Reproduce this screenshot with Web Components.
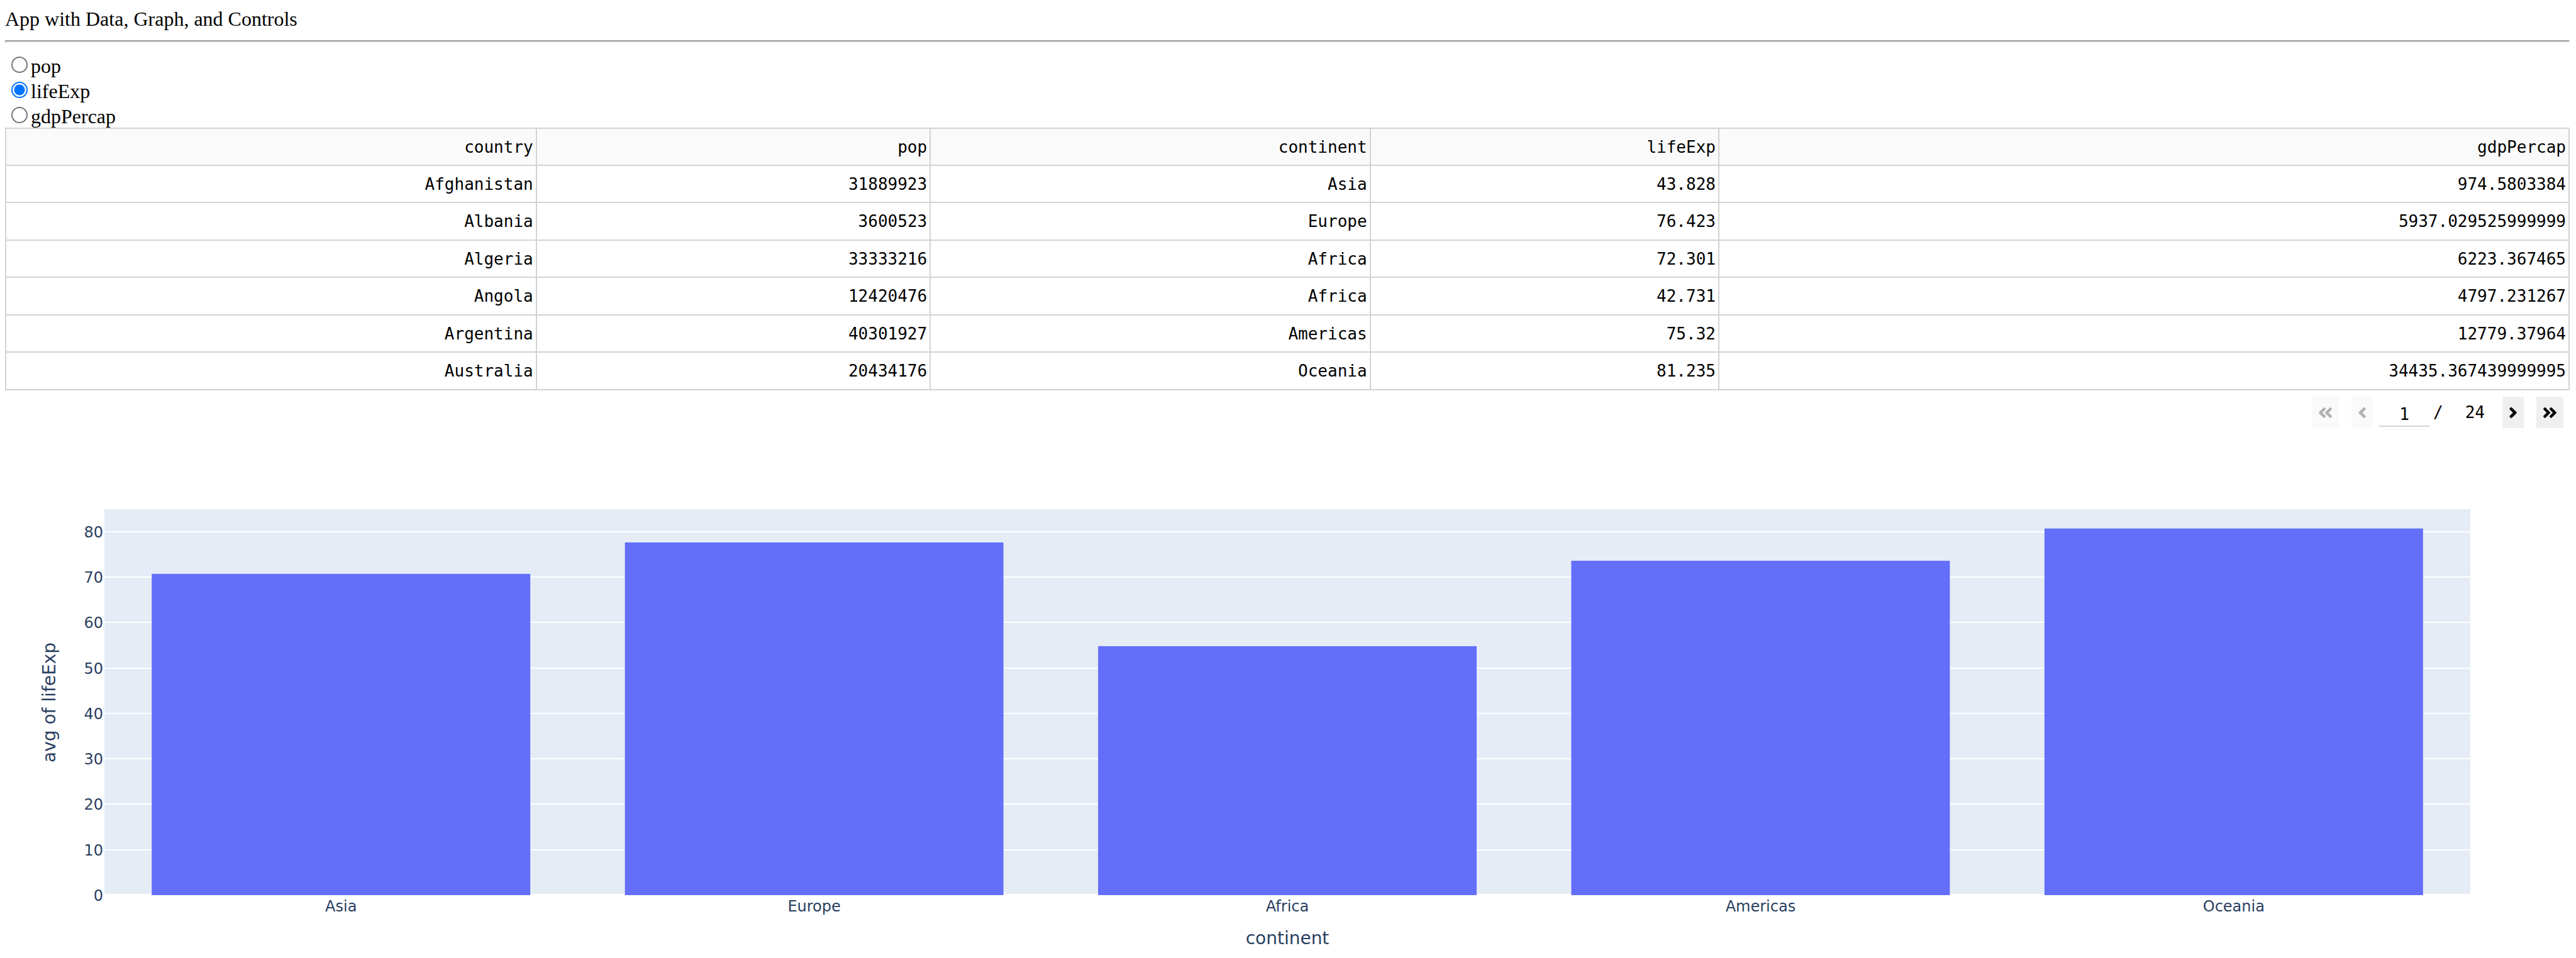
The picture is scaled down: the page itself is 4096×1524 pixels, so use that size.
<!DOCTYPE html>
<html lang="en">
<head>
<meta charset="utf-8">
<title>App with Data, Graph, and Controls</title>
<style>
  body { margin: 0; background: #fff; color: #000; font: 32px/39px "Liberation Serif", "Times New Roman", serif; }
</style>
</head>
<body>
<dash-app>
  <span slot="title">App with Data, Graph, and Controls</span>
  <radio-items name="metric" options="pop,lifeExp,gdpPercap" value="lifeExp"></radio-items>
  <data-table></data-table>
  <page-nav page="1" pages="24"></page-nav>
  <bar-chart xlabel="continent" ylabel="avg of lifeExp"></bar-chart>
</dash-app>

<script>
class DashApp extends HTMLElement {
  constructor() {
    super();
    this.attachShadow({ mode: 'open' }).innerHTML = `
      <style>
        :host { display: block; padding: 12px 10px 0 8px; }
        header { line-height: 36px; }
        hr { margin: 16px 0; border: 2px solid; border-color: #9a9a9a #eee #eee #9a9a9a; }
      </style>
      <header><slot name="title"></slot></header>
      <hr>
      <main><slot></slot></main>`;
  }
}

class RadioItems extends HTMLElement {
  connectedCallback() {
    const name = this.getAttribute('name');
    const value = this.getAttribute('value');
    const items = this.getAttribute('options').split(',').map(o => `
      <label><input type="radio" name="${name}" value="${o}"${o === value ? ' checked' : ''}><span>${o}</span></label>`).join('');
    this.attachShadow({ mode: 'open' }).innerHTML = `
      <style>
        :host { display: block; }
        .group { display: flex; flex-direction: column; gap: 1px; }
        label { display: flex; align-items: flex-start; gap: 5px; height: 39px; line-height: 42px; }
        input { appearance: none; box-sizing: border-box; width: 26px; height: 26px; margin: 6px 0 0 10px;
          border: 2px solid #767676; border-radius: 50%; background: #fff; }
        input:checked { border-color: #0075ff; background: radial-gradient(circle, #0075ff 8px, #fff 9px); }
      </style>
      <div class="group" role="radiogroup">${items}</div>`;
  }
}

class DataTable extends HTMLElement {
  connectedCallback() {
    const columns = ['country', 'pop', 'continent', 'lifeExp', 'gdpPercap'];
    const rows = [
      ['Afghanistan', '31889923', 'Asia', '43.828', '974.5803384'],
      ['Albania', '3600523', 'Europe', '76.423', '5937.029525999999'],
      ['Algeria', '33333216', 'Africa', '72.301', '6223.367465'],
      ['Angola', '12420476', 'Africa', '42.731', '4797.231267'],
      ['Argentina', '40301927', 'Americas', '75.32', '12779.37964'],
      ['Australia', '20434176', 'Oceania', '81.235', '34435.367439999995'],
    ];
    this.attachShadow({ mode: 'open' }).innerHTML = `
      <style>
        :host { display: block; }
        table { width: 100%; border-collapse: collapse; table-layout: fixed;
          font: 26px/30px "DejaVu Sans Mono", Menlo, monospace; }
        th, td { box-sizing: border-box; height: 59px; padding: 0 4px; border: 2px solid #d3d3d3; text-align: right; font-weight: 400; }
        tbody tr:nth-child(even) td { height: 60px; }
        th { background: #fafafa; }
        .c1 { width: 20.7%; } .c2 { width: 15.37%; } .c3 { width: 17.16%; } .c4 { width: 13.6%; }
      </style>
      <table>
        <colgroup><col class="c1"><col class="c2"><col class="c3"><col class="c4"><col></colgroup>
        <thead><tr>${columns.map(c => `<th scope="col">${c}</th>`).join('')}</tr></thead>
        <tbody>${rows.map(r => `<tr>${r.map(c => `<td>${c}</td>`).join('')}</tr>`).join('')}</tbody>
      </table>`;
  }
}

class PageNav extends HTMLElement {
  connectedCallback() {
    const single = '<path d="M31.7 239l136-136c9.4-9.4 24.6-9.4 33.9 0l22.6 22.6c9.4 9.4 9.4 24.6 0 33.9L127.9 256l96.4 96.4c9.4 9.4 9.4 24.6 0 33.9L201.7 409c-9.4 9.4-24.6 9.4-33.9 0l-136-136c-9.5-9.4-9.5-24.6-.1-34z"/>';
    const double = '<path d="M223.7 239l136-136c9.4-9.4 24.6-9.4 33.9 0l22.6 22.6c9.4 9.4 9.4 24.6 0 33.9L319.9 256l96.4 96.4c9.4 9.4 9.4 24.6 0 33.9L393.7 409c-9.4 9.4-24.6 9.4-33.9 0l-136-136c-9.5-9.4-9.5-24.6-.1-34zm-192 34l136 136c9.4 9.4 24.6 9.4 33.9 0l22.6-22.6c9.4-9.4 9.4-24.6 0-33.9L127.9 256l96.4-96.4c9.4-9.4 9.4-24.6 0-33.9L201.7 103c-9.4-9.4-24.6-9.4-33.9 0l-136 136c-9.5 9.4-9.5 24.6-.1 34z"/>';
    this.attachShadow({ mode: 'open' }).innerHTML = `
      <style>
        :host { display: block; padding: 10px 10px 0 0; font: 26px/30px "DejaVu Sans Mono", Menlo, monospace; }
        nav { display: flex; justify-content: flex-end; align-items: center; height: 50px; }
        button { display: flex; align-items: center; justify-content: center; box-sizing: border-box; height: 50px;
          margin: 0; padding: 0 10px; border: 0; background: #efefef; color: #000; }
        button + button { margin-left: 20px; }
        button:disabled { opacity: .3; }
        svg { display: block; height: 27px; fill: currentColor; stroke: currentColor; stroke-width: 10; }
        .s { width: 14px; } .d { width: 23px; }
        .flip { transform: scaleX(-1); }
        .page { display: flex; align-items: center; margin: 0 28px 0 10px; }
        input { box-sizing: border-box; width: 80px; height: 46px; padding: 8px 0 0; border: 0; border-bottom: 2px solid #d3d3d3;
          background: none; font: inherit; text-align: center; color: #000; outline: 0; }
        .slash { margin: 0 35px 0 6px; }
      </style>
      <nav aria-label="Pages">
        <button type="button" disabled aria-label="First page"><svg class="d" viewBox="0 0 448 512">${double}</svg></button>
        <button type="button" disabled aria-label="Previous page"><svg class="s" viewBox="0 0 256 512">${single}</svg></button>
        <div class="page">
          <input type="text" aria-label="Current page" value="${this.getAttribute('page')}">
          <span class="slash">/</span>
          <span>${this.getAttribute('pages')}</span>
        </div>
        <button type="button" aria-label="Next page"><svg class="s flip" viewBox="0 0 256 512">${single}</svg></button>
        <button type="button" aria-label="Last page"><svg class="d flip" viewBox="0 0 448 512">${double}</svg></button>
      </nav>`;
  }
}

class BarChart extends HTMLElement {
  connectedCallback() {
    const data = [['Asia', 70.7285], ['Europe', 77.6486], ['Africa', 54.806], ['Americas', 73.608], ['Oceania', 80.7195]];
    const max = 80.7195 / 0.95;
    const y = v => (100 - v / max * 100).toFixed(3) + '%';
    const ticks = [0, 10, 20, 30, 40, 50, 60, 70, 80];
    const lines = ticks.map(t => `<line x1="0" x2="100%" y1="${y(t)}" y2="${y(t)}" stroke-width="${t ? 2 : 4}"/>`).join('');
    const labels = ticks.map(t => `<text x="0" y="${y(t)}" dx="-2" dy="9" text-anchor="end">${t}</text>`).join('');
    const bars = data.map(([, v], i) =>
      `<rect x="${i * 20 + 2}%" width="16%" y="${y(v)}" height="${(v / max * 100).toFixed(3)}%"/>`).join('');
    const names = data.map(([n]) => `<span>${n}</span>`).join('');
    this.attachShadow({ mode: 'open' }).innerHTML = `
      <style>
        :host { display: block; padding-top: 129px; color: #2a3f5f;
          font: 24px/28px "DejaVu Sans", Verdana, sans-serif; }
        figure { display: grid; grid-template-columns: 88px minmax(0, 1fr); column-gap: 70px; margin: 0 158px 0 0; }
        .ylabel { justify-self: end; align-self: center; writing-mode: vertical-rl; transform: rotate(180deg);
          font-size: 28px; line-height: 34px; }
        .plot { display: block; width: 100%; height: 614px; overflow: visible; background: #e5ecf6; fill: #2a3f5f; }
        .grid { stroke: #fff; shape-rendering: crispEdges; }
        .bars { fill: #636efa; }
        .names { grid-column: 2; display: flex; margin-top: 4px; }
        .names span { flex: 1; text-align: center; }
        figcaption { grid-column: 2; margin-top: 20px; text-align: center; font-size: 28px; line-height: 34px; }
      </style>
      <figure>
        <div class="ylabel">${this.getAttribute('ylabel')}</div>
        <svg class="plot" role="img" aria-label="${this.getAttribute('ylabel')} by ${this.getAttribute('xlabel')}">
          <g class="grid">${lines}</g><g class="bars">${bars}</g><g>${labels}</g>
        </svg>
        <div class="names">${names}</div>
        <figcaption>${this.getAttribute('xlabel')}</figcaption>
      </figure>`;
  }
}

customElements.define('radio-items', RadioItems);
customElements.define('data-table', DataTable);
customElements.define('page-nav', PageNav);
customElements.define('bar-chart', BarChart);
customElements.define('dash-app', DashApp);
</script>
</body>
</html>
